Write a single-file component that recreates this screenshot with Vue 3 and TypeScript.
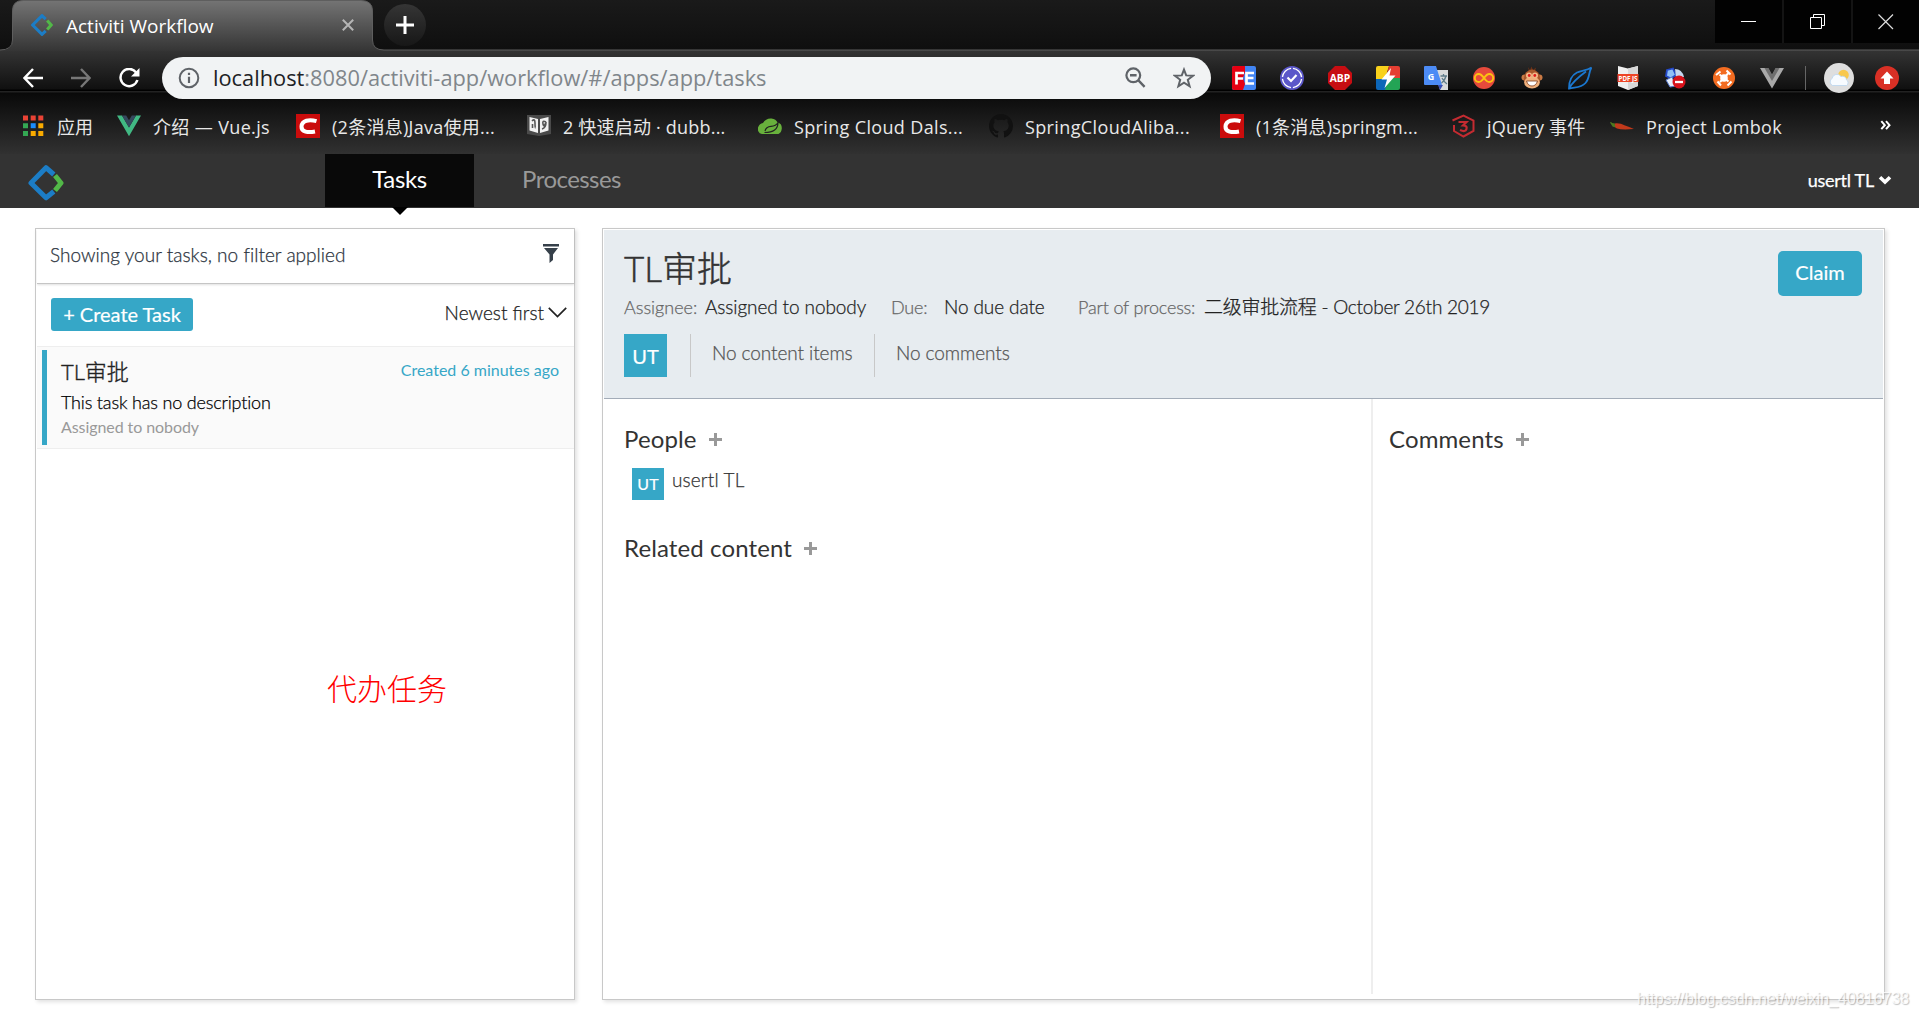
<script setup lang="ts">
interface Bookmark {
  icon: string
  label: string
  width: number
  spacing: number
}

const bookmarks: Bookmark[] = [
  { icon: 'apps', label: '应用', width: 94, spacing: 0 },
  { icon: 'vue', label: '介绍 — Vue.js', width: 179, spacing: 0.36 },
  { icon: 'csdn', label: '(2条消息)Java使用...', width: 231, spacing: 0.27 },
  { icon: 'book', label: '2 快速启动 · dubb...', width: 231, spacing: 0.2 },
  { icon: 'spring', label: 'Spring Cloud Dals...', width: 231, spacing: 0.35 },
  { icon: 'github', label: 'SpringCloudAliba...', width: 231, spacing: 0.37 },
  { icon: 'csdn', label: '(1条消息)springm...', width: 231, spacing: 0.24 },
  { icon: 'w3c', label: 'jQuery 事件', width: 159, spacing: 0.19 },
  { icon: 'chili', label: 'Project Lombok', width: 200, spacing: 0.32 },
]
</script>

<template>
  <div class="window">
    <div class="tabstrip">
      <svg class="tab-shape" width="1919" height="51" viewBox="0 0 1919 51">
        <defs>
          <linearGradient id="tabfill" x1="0" y1="0" x2="0" y2="1">
            <stop offset="0" stop-color="#747474" />
            <stop offset="1" stop-color="#353535" />
          </linearGradient>
        </defs>
        <path d="M0 50.5 Q12.5 50.5 12.5 40 V11 Q12.5 .5 23 .5 H361 Q372.5 .5 372.5 11 V40 Q372.5 50 384 50 V51 H0Z" fill="url(#tabfill)" />
        <path d="M0 50 Q12.5 50 12.5 40 V11 Q12.5 .5 23 .5 H361 Q372.5 .5 372.5 11 V40 Q372.5 50 384 50 H1919" fill="none" stroke="#5e5e5e" />
      </svg>
      <div class="tab">
        <svg width="22" height="22" viewBox="0 0 36 36"><path d="M24 8.5 18 2.7 2.7 18 18 33.3 24 27.5" fill="none" stroke="#1c7dc6" stroke-width="5" /><path d="M26.5 10.5 33 18 26.5 25.5" fill="none" stroke="#52b848" stroke-width="5" /></svg>
        <span class="tab-title">Activiti Workflow</span>
        <svg class="tab-close" width="12" height="12" viewBox="0 0 12 12"><path d="M.8.8 11.2 11.2M11.2.8.8 11.2" stroke="#b5b5b5" stroke-width="2" /></svg>
      </div>
      <div class="newtab"><svg width="18" height="18" viewBox="0 0 18 18"><path d="M9 0V18M0 9H18" stroke="#fff" stroke-width="3" /></svg></div>
      <div class="winbtns">
        <div class="winbtn"><svg width="16" height="16" viewBox="0 0 16 16"><path d="M0 7.5H15" stroke="#fff" /></svg></div>
        <div class="winbtn"><svg width="16" height="16" viewBox="0 0 16 16"><path d="M.5 3.5H11.5V14.5H.5ZM3.5 3.5V.5H14.5V11.5H11.5" fill="none" stroke="#fff" /></svg></div>
        <div class="winbtn"><svg width="16" height="16" viewBox="0 0 16 16"><path d="M.5.5 15 15M15 .5 .5 15" stroke="#ddd" stroke-width="1.2" /></svg></div>
      </div>
    </div>

    <div class="chrome">
      <div class="toolbar">
        <div class="navs">
          <svg width="20" height="20" viewBox="0 0 20 20"><path d="M20 10H2M10 1 1.5 10 10 19" fill="none" stroke="#fff" stroke-width="2.4" /></svg>
          <svg width="20" height="20" viewBox="0 0 20 20"><path d="M0 10H18M10 1 18.5 10 10 19" fill="none" stroke="#777" stroke-width="2.4" /></svg>
          <svg width="21" height="20" viewBox="0 0 21 20"><path d="M17.2 4.6A8.6 8.6 0 1 0 18.4 12" fill="none" stroke="#fff" stroke-width="2.5" /><path d="M20.5 0V8.5H12Z" fill="#fff" /></svg>
        </div>
        <div class="omnibox">
          <svg width="22" height="22" viewBox="0 0 22 22"><circle cx="11" cy="11" r="9.3" fill="none" stroke="#5f6368" stroke-width="2" /><path d="M11 9.8V16M11 5.8V8" stroke="#5f6368" stroke-width="2.2" /></svg>
          <span class="url"><b>localhost</b>:8080/activiti-app/workflow/#/apps/app/tasks</span>
          <svg class="mag" width="22" height="22" viewBox="0 0 22 22"><circle cx="8.3" cy="8.3" r="6.9" fill="none" stroke="#5f6368" stroke-width="2.2" /><path d="M13.2 13.2 19.6 19.8M5 8.3H11.6" stroke="#5f6368" stroke-width="2.4" /></svg>
          <svg width="22" height="22" viewBox="0 0 22 22"><path d="M11 2.6 13.2 8.4 20 8.7 14.8 12.8 16.6 19.3 11 15.6 5.4 19.3 7.2 12.8 2 8.7 8.8 8.4Z" fill="none" stroke="#5f6368" stroke-width="2" /></svg>
        </div>
        <div class="exts">
          <svg width="24" height="24" viewBox="0 0 24 24"><rect width="24" height="24" rx="2" fill="#4285f4" /><path d="M2 0H13V6L11 12 13 18 11 24H2Q0 24 0 22V2Q0 0 2 0Z" fill="#e60012" /><path d="M4.5 18.500V7H12M4.500 12.500H11M22 7H14.500V17.500H22M14.500 12H21.500" fill="none" stroke="#fff" stroke-width="2.700" /></svg>
          <svg width="24" height="24" viewBox="0 0 24 24"><circle cx="12" cy="12" r="12" fill="#5b57c9" /><circle cx="12" cy="12" r="9.600" fill="none" stroke="#fff" stroke-width="1.300" stroke-dasharray="13 2" stroke-dashoffset="-1" /><path d="M7.500 11.500 11 15 16.500 9" fill="none" stroke="#fff" stroke-width="2.200" /></svg>
          <svg width="24" height="24" viewBox="0 0 24 24"><path d="M7 0H17L24 7V17L17 24H7L0 17V7Z" fill="#c70d12" /><text x="12" y="16.200" class="abp" textLength="20.500" lengthAdjust="spacingAndGlyphs">ABP</text></svg>
          <svg width="24" height="24" viewBox="0 0 24 24"><path d="M2 0H13L9 13H0V2Q0 0 2 0Z" fill="#f8d11c" /><path d="M13 0H22Q24 0 24 2V12H10Z" fill="#e63e32" /><path d="M0 13H13L10 24H2Q0 24 0 22Z" fill="#0c66b8" /><path d="M12 12H24V22Q24 24 22 24H9Z" fill="#23a455" /><path d="M15 2 5.500 13.500H11L8.500 22 19.500 9.500H13.500Z" fill="#fff" /></svg>
          <svg width="24" height="24" viewBox="0 0 24 24"><path d="M10 4H24V24H16Z" fill="#d9dadb" /><path d="M14 19H19L16 24Z" fill="#3c50b5" /><path d="M1 0H12L18 19H1Q0 19 0 18V1Q0 0 1 0Z" fill="#4c8bf5" /><text x="7" y="13.500" class="gt">G</text><path d="M16.500 10H23M19.500 8V10M22 10Q20.500 15 17.500 17M18 12Q20 16 23 18" fill="none" stroke="#607d8b" stroke-width="1.300" /></svg>
          <svg width="24" height="24" viewBox="0 0 24 24"><circle cx="12" cy="12" r="11" fill="#e64a3c" /><path d="M12 12C9.500 8.500 8 8 6.800 8A4 4 0 0 0 6.800 16C8 16 9.500 15.500 12 12S16 8 17.200 8A4 4 0 0 1 17.200 16C16 16 14.500 15.500 12 12Z" fill="none" stroke="#fbc312" stroke-width="1.900" /></svg>
          <svg width="24" height="24" viewBox="0 0 24 24"><circle cx="4.500" cy="11.500" r="3" fill="#c97a45" /><circle cx="19.500" cy="11.500" r="3" fill="#c97a45" /><path d="M8 1 10 4 11.500 .5 13 4 16 1.500 15 5H9Z" fill="#6d3217" /><ellipse cx="12" cy="12.800" rx="8.200" ry="9.200" fill="#a9582b" /><ellipse cx="12" cy="16.500" rx="7.800" ry="6" fill="#efb07c" /><circle cx="9" cy="9.500" r="3" fill="#f2b888" /><circle cx="15" cy="9.500" r="3" fill="#f2b888" /><circle cx="9.200" cy="9.500" r="1.400" fill="#e01b1b" /><circle cx="14.800" cy="9.500" r="1.400" fill="#e01b1b" /><path d="M6.500 15H17.500Q16 20 12 20T6.500 15Z" fill="#fff" stroke="#7c3b1d" stroke-width=".8" /></svg>
          <svg width="24" height="24" viewBox="0 0 24 24"><path d="M1 22.500C1 14 4 9 9 6.500S18 5 23.500 1.500C20.500 6 22 12 17.500 17S8 21 1 22.500ZM1 22.500Q5 15 18 5.500" fill="none" stroke="#1b78d0" stroke-width="1.800" /></svg>
          <svg width="24" height="24" viewBox="0 0 24 24"><path d="M2 0 12 2.500 22 0V20L12 24 2 20Z" fill="#f0f0f0" /><path d="M12 2.500 22 0V20L12 24Z" fill="#d8d8d8" /><rect x="1.500" y="8" width="21" height="8" fill="#ee4526" /><text x="12" y="14.600" class="pdf" textLength="19" lengthAdjust="spacingAndGlyphs">PDF JS</text></svg>
          <svg width="24" height="24" viewBox="0 0 24 24"><path d="M3 4 9 2.500 12 9 7 12.500 2 10Z" fill="#8fc0f8" stroke="#2449c8" stroke-width="1.800" /><path d="M11 3Q18 3 20 11L12 12Z" fill="#c5d7ef" /><path d="M2 14 8 11 12 20 6 21Z" fill="#e6eefb" stroke="#5577c9" /><circle cx="15" cy="16" r="6.500" fill="#d8131c" /><path d="M11 16H19" stroke="#fff" stroke-width="2.300" /></svg>
          <svg width="24" height="24" viewBox="0 0 24 24"><circle cx="12" cy="12" r="11" fill="#f36c21" /><circle cx="12" cy="12" r="3.800" fill="#fff" /><path d="M12 12 7.500 8.500M12 12 16 7.500M12 12 8 16M12 12 16.500 15.500M4 9 8.500 5.500M14.500 4.500 18.500 8.500M5.500 15.500 9 19.500M15.500 19.500 19.500 15.500" stroke="#fff" stroke-width="2" /></svg>
          <svg width="24" height="24" viewBox="0 0 24 24"><path d="M0 2H8L12 9 16 2H24L12 22.500Z" fill="#a9a9a9" /><path d="M4.500 2H8.500L12 8.500 15.500 2H19.500L12 15Z" fill="#6f6f6f" /></svg>
        </div>
        <div class="sep"></div>
        <svg class="avatar" width="30" height="30" viewBox="0 0 30 30"><circle cx="15" cy="15" r="15" fill="#dedede" /><circle cx="19.500" cy="12" r="5.300" fill="#f8c84e" /><path d="M8.500 22.500A4 4 0 0 1 8 15.500 5 5 0 0 1 17 13.500 4 4 0 0 1 22.500 17 3.200 3.200 0 0 1 22.500 22.500Z" fill="#f7fbff" stroke="#b9d4ef" stroke-width=".8" /></svg>
        <svg width="24" height="24" viewBox="0 0 24 24"><circle cx="12" cy="12" r="12" fill="#d93025" /><path d="M12 5.500 18.500 12.500H15V18H9V12.500H5.500Z" fill="#fff" /></svg>
      </div>

      <div class="bookmarks">
        <div v-for="(b, i) in bookmarks" :key="i" class="bm" :style="{ width: b.width + 'px' }">
          <svg v-if="b.icon === 'apps'" width="22" height="24" viewBox="0 0 22 24"><path d="M0 1.500H5V6.500H0ZM7.700 1.500H12.700V6.500H7.700ZM15.300 1.500H20.300V6.500H15.300Z" fill="#ea4335" /><path d="M0 9.200H5V14.200H0ZM0 16.900H5V21.900H0Z" fill="#34a853" /><path d="M7.700 9.200H12.700V14.200H7.700Z" fill="#1a8cff" /><path d="M15.300 9.200H20.300V14.200H15.300ZM7.700 16.900H12.700V21.900H7.700ZM15.300 16.900H20.300V21.900H15.300Z" fill="#f9ab00" /></svg>
          <svg v-else-if="b.icon === 'vue'" width="24" height="24" viewBox="0 0 24 24"><path d="M0 1.500H5L12 13.500 19 1.500H24L12 22.200Z" fill="#41b883" /><path d="M5 1.500H9.200L12 6.300 14.800 1.500H19L12 13.500Z" fill="#35495e" /></svg>
          <svg v-else-if="b.icon === 'csdn'" width="24" height="24" viewBox="0 0 24 24"><rect width="24" height="24" fill="#ca0c0c" /><path d="M20.500 7.200C13 5 6 6.500 5.500 12.500 5.200 18 12 18.800 19 17.500" fill="none" stroke="#fff" stroke-width="4" /></svg>
          <svg v-else-if="b.icon === 'book'" width="24" height="24" viewBox="0 0 24 24"><path d="M0 1H24V20L12 22 0 20Z" fill="#4a4a4a" /><path d="M2.500 3 11 5V19L2.500 16.500ZM21.500 3 13 5V19L21.500 16.500Z" fill="#f2f2f2" /><path d="M5 7Q8 4 8 9T8.500 14M5.500 10V14M19 8Q15 6 16 10T19 8Q19 14 15 15" fill="none" stroke="#555" stroke-width="1.600" /></svg>
          <svg v-else-if="b.icon === 'spring'" width="24" height="24" viewBox="0 0 24 24"><path d="M4 20A5 5 0 0 1 .5 12.500Q1.500 9.500 5 9 8 4 13.500 4.500 18 5 19.500 8.500 24 9.500 23.800 14.500 23.500 18.500 20.500 20Z" fill="#68b13c" /><path d="M6.500 18.500Q20 18.500 20 8.500M7 17Q8 12.500 13 12.300T20 8.500" fill="none" stroke="#222" stroke-width="1.200" /></svg>
          <svg v-else-if="b.icon === 'github'" width="24" height="24" viewBox="0 0 16 16"><path fill="#111" d="M8 0C3.580 0 0 3.580 0 8c0 3.540 2.290 6.530 5.470 7.590.4.070.55-.17.55-.38 0-.19-.01-.82-.01-1.490-2.010.37-2.530-.49-2.690-.94-.09-.23-.48-.94-.82-1.130-.28-.15-.68-.52-.01-.53.63-.01 1.080.58 1.230.82.72 1.210 1.870.87 2.330.66.07-.52.28-.87.51-1.070-1.780-.2-3.640-.89-3.640-3.950 0-.87.31-1.590.82-2.150-.08-.2-.36-1.020.08-2.120 0 0 .67-.21 2.200.82.64-.18 1.320-.27 2-.27s1.360.09 2 .27c1.530-1.040 2.200-.82 2.200-.82.44 1.100.16 1.920.08 2.120.51.56.82 1.270.82 2.150 0 3.070-1.870 3.750-3.650 3.950.29.25.54.73.54 1.480 0 1.070-.01 1.930-.01 2.200 0 .21.15.46.55.38A8.010 8.010 0 0 0 16 8c0-4.420-3.580-8-8-8Z" /></svg>
          <svg v-else-if="b.icon === 'w3c'" width="24" height="24" viewBox="0 0 24 24"><path d="M1.500 6.500 12.500 1.500 22.500 6.500V17L12.500 22.500 3 17V11" fill="none" stroke="#c42b31" stroke-width="2" /><path d="M7.500 8H15.500L12 11.500Q16.500 11.500 15.500 15T9 16" fill="none" stroke="#c42b31" stroke-width="2.200" /></svg>
          <svg v-else width="24" height="24" viewBox="0 0 24 24"><path d="M4.500 9.500Q10 8.800 15 11.500 19 12.800 24 15Q12 16.200 7 14.500 3.800 13.500 4.500 9.500Z" fill="#c1391b" /><path d="M0 8.500 1 8Q2 9.500 4.500 9.200L5.500 13.500 2.500 12.500Z" fill="#4d7a1f" /></svg>
          <span class="bmt" :style="{ letterSpacing: b.spacing + 'px' }">{{ b.label }}</span>
        </div>
        <svg class="more" width="12" height="12" viewBox="0 0 12 12"><path d="M1.300 1.200 4.800 5.200 1.300 9.200M6 1.200 9.500 5.200 6 9.200" fill="none" stroke="#fff" stroke-width="2" /></svg>
      </div>
    </div>

    <header class="apphead">
      <svg class="logo" width="36" height="36" viewBox="0 0 36 36"><path d="M25.800 9.500 18 2.700 3 18 18 32.800 25.800 26.500" fill="none" stroke="#1c7dc6" stroke-width="5" stroke-linejoin="round" /><path d="M27 10.500 33 18 27 25.500" fill="none" stroke="#52b848" stroke-width="5" stroke-linejoin="round" /></svg>
      <nav>
        <a class="nav active"><span>Tasks</span></a>
        <a class="nav"><span>Processes</span></a>
      </nav>
      <div class="user"><span>usertl TL</span><svg width="14" height="10" viewBox="0 0 14 10"><path d="M2 2.200 7 7 12 2.200" fill="none" stroke="#fff" stroke-width="3.600" /></svg></div>
    </header>

    <main class="content">
      <section class="panel tasks">
        <div class="filter">
          <span class="filter-text">Showing your tasks, no filter applied</span>
          <svg width="16" height="20" viewBox="0 0 16 20"><path d="M0 0H16V2.500H0ZM1 4H15L10 10.500V16L6.500 19V10.500Z" fill="#36404a" /></svg>
        </div>
        <div class="actions">
          <button class="create">+ Create Task</button>
          <div class="sort"><span>Newest first</span><svg width="19" height="11" viewBox="0 0 19 11"><path d="M.8.8 9.500 9.500 18.200.8" fill="none" stroke="#222" stroke-width="1.700" /></svg></div>
        </div>
        <article class="task">
          <div class="task-body">
            <div class="task-top"><span class="task-name">TL审批</span><span class="task-when">Created 6 minutes ago</span></div>
            <div class="task-desc"><span>This task has no description</span></div>
            <div class="task-who"><span>Assigned to nobody</span></div>
          </div>
        </article>
        <p class="note">代办任务</p>
      </section>

      <section class="panel detail">
        <div class="head">
          <div>
            <h1>TL审批</h1>
            <div class="meta">
              <span class="k k1">Assignee:</span><span class="v v1">Assigned to nobody</span>
              <span class="k k2">Due:</span><span class="v v2">No due date</span>
              <span class="k k3">Part of process:</span><span class="v v3">二级审批流程 - October 26th 2019</span>
            </div>
            <div class="stats">
              <div class="badge">UT</div>
              <div class="stat s1"><span>No content items</span></div>
              <div class="stat"><span>No comments</span></div>
            </div>
          </div>
          <button class="claim">Claim</button>
        </div>
        <div class="cols">
          <div class="left">
            <h2><span>People</span><i class="plus"></i></h2>
            <div class="person"><div class="badge small">UT</div><span>usertl TL</span></div>
            <h2 class="related"><span>Related content</span><i class="plus"></i></h2>
          </div>
          <div class="right">
            <h2><span>Comments</span><i class="plus"></i></h2>
          </div>
        </div>
      </section>
    </main>
    <div class="watermark">https://blog.csdn.net/weixin_40816738</div>
  </div>
</template>

<style>
body { margin: 0; background: #fff; }
</style>

<style scoped>
* { box-sizing: border-box; }
svg { display: block; flex: none; }
span, button, h1 { white-space: nowrap; }
.window { position: relative; width: 1919px; height: 1018px; overflow: hidden; background: #fff; font-family: Lato, "Noto Sans CJK SC", sans-serif; display: flex; flex-direction: column; }

.tabstrip { position: relative; flex: none; height: 50px; background: linear-gradient(#1a1a1a, #0f0f0f); display: flex; font-family: "Open Sans", "Noto Sans CJK SC", sans-serif; }
.tab-shape { position: absolute; left: 0; top: 0; }
.tab { position: relative; width: 372px; height: 50px; padding: 0 18px 0 31px; display: flex; align-items: center; }
.tab-title { margin-left: 13px; font-size: 19px; color: #fff; line-height: 24px; padding-top: 2px; }
.tab-close { margin-left: auto; }
.newtab { margin: 4px 0 0 12px; width: 42px; height: 42px; border-radius: 50%; background: linear-gradient(#353535, #171717); display: flex; align-items: center; justify-content: center; position: relative; }
.winbtns { margin-left: auto; display: flex; gap: 2px; background: #141414; height: 43px; }
.winbtn { width: 67px; background: #020202; display: flex; align-items: center; justify-content: center; }
.winbtn:last-child { width: 66px; }

.chrome { flex: none; height: 104px; background: linear-gradient(#343434 0, #101010 39px, #000 40px, #000 41px, #222 41px, #222 42px, #090909 43px, #313131 104px); font-family: "Open Sans", "Noto Sans CJK SC", sans-serif; }
.toolbar { height: 56px; padding: 7px 20px 7px 23px; display: flex; align-items: center; }
.navs { display: flex; gap: 28px; width: 139px; flex: none; }
.omnibox { width: 1049px; flex: none; height: 42px; border-radius: 21px; background: #f1f3f4; display: flex; align-items: center; padding: 0 16px; }
.url { margin-left: 13px; font-size: 21.8px; color: #80868b; line-height: 30px; }
.url b { font-weight: 400; color: #202124; }
.mag { margin: 0 26px 0 auto; }
.exts { display: flex; gap: 24px; margin-left: 21px; }
.sep { width: 1px; height: 24px; background: #666; margin: 0 18px 0 21px; }
.avatar { margin-right: 21px; }
.abp { font: bold 11px "Open Sans", sans-serif; fill: #fff; text-anchor: middle; }
.gt { font: bold 9px "Open Sans", sans-serif; fill: #fff; text-anchor: middle; }
.pdf { font: bold 7px "Open Sans", sans-serif; fill: #fff; text-anchor: middle; }
.bookmarks { height: 48px; padding: 8px 27px 0 23px; display: flex; }
.bm { display: flex; flex: none; height: 24px; align-items: center; }
.bmt { margin-left: 12px; font-size: 18px; line-height: 24px; padding-top: 2px; color: #e8e8e8; }
.more { margin: 6px 0 0 auto; }

.apphead { flex: none; height: 54px; background: #333; display: flex; position: relative; }
.logo { margin: 11px 0 0 28px; }
nav { display: flex; margin-left: 261px; }
.nav { width: 149px; height: 53px; font-size: 24px; line-height: 50px; color: #999; text-align: center; letter-spacing: -.4px; }
.nav + .nav { width: 195px; letter-spacing: -.55px; }
.nav.active { background: #090909; color: #fff; position: relative; }
.nav.active::after { content: ""; position: absolute; left: 67px; top: 53px; border: 8px solid transparent; border-top-color: #000; border-bottom: 0; }
.user { margin-left: auto; padding-right: 27px; display: flex; align-items: center; gap: 4px; height: 51px; font-size: 18px; letter-spacing: -.25px; color: #fff; -webkit-text-stroke: .25px #fff; }

.content { flex: 1; display: flex; padding: 20px 34px 18px 35px; gap: 27px; }
.panel { border: 1px solid #c8c8c8; box-shadow: 2px 2px 4px rgba(0, 0, 0, .12); background: #fff; }
.tasks { width: 540px; flex: none; }
.filter { height: 55px; border-bottom: 1px solid #c5c5c5; box-shadow: 0 1px 2px rgba(0, 0, 0, .12); margin: 0 0 0 1px; display: flex; justify-content: space-between; padding: 15px 15px 0 13px; }
.filter-text { font-size: 19px; font-weight: 300; line-height: 22px; color: #2c3440; letter-spacing: .03px; }
.filter-text, .sort span, .task-desc, .meta, .stat, .person > span { -webkit-text-stroke: .25px currentColor; }
.actions { display: flex; justify-content: space-between; height: 62px; padding: 14px 7px 0 15px; }
button { border: 0; color: #fff; background: #36a7c7; font-family: inherit; padding: 0; }
.create { width: 142px; height: 33px; border-radius: 3px; font-size: 20px; padding-bottom: 2px; -webkit-text-stroke: .2px #fff; }
.sort { display: flex; gap: 4px; font-size: 19px; font-weight: 300; line-height: 30px; color: #222; }
.sort svg { margin-top: 9px; }
.task { margin-left: 1px; height: 103px; background: #fafafa; border: solid #eee; border-width: 1px 0; padding: 3px 0 4px 5px; }
.task-body { border-left: 5px solid #36a7c7; height: 95px; padding: 8px 15px 0 14px; }
.task-top { display: flex; justify-content: space-between; height: 29px; }
.task-name { font-size: 22px; font-weight: 300; line-height: 27px; color: #222; -webkit-text-stroke: .35px #222; }
.task-when { font-size: 16px; line-height: 24px; color: #36a7c7; }
.task-desc { font-size: 18px; font-weight: 300; line-height: 30px; height: 30px; color: #000; letter-spacing: -.17px; }
.task-who { font-size: 16px; line-height: 20px; color: #999; letter-spacing: -.08px; }
.note { margin: 218px 0 0 291px; font-size: 30px; line-height: 40px; color: #f00; font-weight: 300; font-family: "Noto Sans CJK SC", sans-serif; }

.detail { flex: 1; padding: 1px; display: flex; flex-direction: column; }
.head { flex: none; height: 169px; background: #e7ecf0; border-bottom: 1px solid #a3acb8; padding: 0 21px 0 20px; display: flex; justify-content: space-between; }
h1 { margin: 14px 0 0; font-size: 35px; line-height: 48px; font-weight: 300; color: #333; -webkit-text-stroke: .5px #333; }
.meta { display: flex; height: 31px; line-height: 30px; font-size: 19px; font-weight: 300; }
.k { color: #666; font-size: 18px; }
.v { color: #222; letter-spacing: -.1px; }
.k1 { width: 81px; }
.v1 { width: 186px; }
.k2 { width: 53px; letter-spacing: -.2px; }
.v2 { width: 134px; }
.k3 { width: 126px; letter-spacing: -.17px; }
.v3 { letter-spacing: -.24px; }
.stats { display: flex; margin-top: 11px; }
.badge { width: 43px; height: 43px; background: #36a7c7; color: #fff; font-size: 20px; line-height: 44px; text-align: center; -webkit-text-stroke: .2px #fff; }
.stat { border-left: 1px solid #c8c8c8; height: 43px; line-height: 38px; font-size: 19px; font-weight: 300; color: #555; padding-left: 21px; letter-spacing: -.08px; }
.s1 { margin-left: 23px; width: 184px; }
.claim { margin-top: 21px; width: 84px; height: 45px; border-radius: 5px; font-size: 20px; padding-bottom: 3px; -webkit-text-stroke: .2px #fff; }
.cols { flex: 1; display: flex; }
.left { width: 769px; border-right: 2px solid #eee; padding-left: 20px; margin-bottom: 4px; }
.right { padding-left: 16px; }
h2 { margin: 24px 0 0; height: 33px; font-size: 24px; line-height: 32px; font-weight: 400; color: #333; display: flex; letter-spacing: .12px; }
.plus { margin: 10px 0 0 12px; width: 13px; height: 13px; background: linear-gradient(#999, #999) center / 3px 13px no-repeat, linear-gradient(#999, #999) center / 13px 3px no-repeat; }
.person { display: flex; margin: 12px 0 0 8px; height: 32px; font-size: 19px; font-weight: 300; line-height: 24px; color: #333; gap: 8px; letter-spacing: .15px; }
.small { width: 32px; height: 32px; font-size: 16px; font-weight: 400; line-height: 32px; }
.related { margin-top: 32px; }
.watermark { position: absolute; left: 1637px; top: 987px; font: 16px/24px "Liberation Sans", Arial, sans-serif; color: rgba(255, 255, 255, .8); text-shadow: 1px 1px 1px rgba(0, 0, 0, .25); white-space: nowrap; }
</style>
